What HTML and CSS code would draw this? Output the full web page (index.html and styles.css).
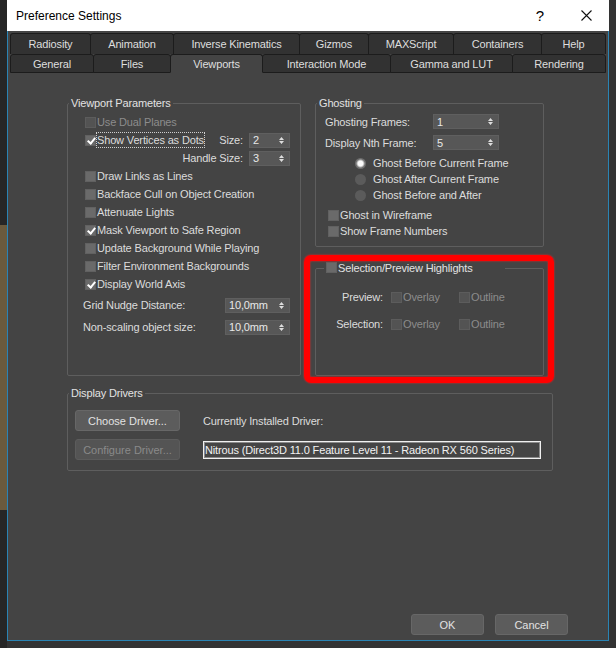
FILE: index.html
```html
<!DOCTYPE html>
<html lang="en">

<head>
    <meta charset="UTF-8">
    <meta name="viewport" content="width=device-width, initial-scale=1.0">
    <title>Preference Settings</title>
    <link rel="stylesheet" href="styles.css">
</head>

<body>
    <div class="window">
        <div class="titlebar">
            <span class="title">Preference Settings</span>
            <span class="cap help">?</span>
            <span class="cap close">
                <svg width="11" height="11" viewBox="0 0 11 11">
                    <path d="M0.5 0.5L10.5 10.5M10.5 0.5L0.5 10.5" stroke="#111" stroke-width="1.1" fill="none" />
                </svg>
            </span>
        </div>
        <div class="client">
            <div class="tabs">
                <div class="tabrow back">
                    <div class="tab">Radiosity</div>
                    <div class="tab">Animation</div>
                    <div class="tab">Inverse Kinematics</div>
                    <div class="tab">Gizmos</div>
                    <div class="tab">MAXScript</div>
                    <div class="tab">Containers</div>
                    <div class="tab">Help</div>
                </div>
                <div class="tabrow front">
                    <div class="tab">General</div>
                    <div class="tab">Files</div>
                    <div class="tab active">Viewports</div>
                    <div class="tab">Interaction Mode</div>
                    <div class="tab">Gamma and LUT</div>
                    <div class="tab">Rendering</div>
                </div>
            </div>

            <div class="panel">
                <div class="columns">
                    <fieldset class="group vp">
                        <legend>Viewport Parameters</legend>
                        <div class="vp-body">
                            <div class="row"><span class="cb off"></span><span class="dim">Use Dual Planes</span></div>
                            <div class="row">
                                <span class="cb checked"></span><span class="focus">Show Vertices as Dots</span>
                                <span class="lbl push">Size:</span>
                                <span class="spin sm">2<svg class="arr" width="5" height="9" viewBox="0 0 5 9"><path d="M0 4H5L2.5 1ZM0 5H5L2.5 8Z" fill="#ddd" /></svg></span>
                            </div>
                            <div class="row">
                                <span class="lbl push">Handle Size:</span>
                                <span class="spin sm">3<svg class="arr" width="5" height="9" viewBox="0 0 5 9"><path d="M0 4H5L2.5 1ZM0 5H5L2.5 8Z" fill="#ddd" /></svg></span>
                            </div>
                            <div class="row"><span class="cb"></span><span>Draw Links as Lines</span></div>
                            <div class="row"><span class="cb"></span><span>Backface Cull on Object Creation</span></div>
                            <div class="row"><span class="cb"></span><span>Attenuate Lights</span></div>
                            <div class="row"><span class="cb checked"></span><span>Mask Viewport to Safe Region</span></div>
                            <div class="row"><span class="cb"></span><span>Update Background While Playing</span></div>
                            <div class="row"><span class="cb"></span><span>Filter Environment Backgrounds</span></div>
                            <div class="row"><span class="cb checked"></span><span>Display World Axis</span></div>
                            <div class="row tall first">
                                <span>Grid Nudge Distance:</span>
                                <span class="spin md">10,0mm<svg class="arr" width="5" height="9" viewBox="0 0 5 9"><path d="M0 4H5L2.5 1ZM0 5H5L2.5 8Z" fill="#ddd" /></svg></span>
                            </div>
                            <div class="row tall">
                                <span>Non-scaling object size:</span>
                                <span class="spin md">10,0mm<svg class="arr" width="5" height="9" viewBox="0 0 5 9"><path d="M0 4H5L2.5 1ZM0 5H5L2.5 8Z" fill="#ddd" /></svg></span>
                            </div>
                        </div>
                    </fieldset>

                    <div class="col">
                        <fieldset class="group ghost">
                            <legend>Ghosting</legend>
                            <div class="ghost-body">
                                <div class="g-row">
                                    <span class="g-lbl">Ghosting Frames:</span>
                                    <span class="spin lg">1<svg class="arr" width="5" height="9" viewBox="0 0 5 9"><path d="M0 4H5L2.5 1ZM0 5H5L2.5 8Z" fill="#ddd" /></svg></span>
                                </div>
                                <div class="g-row">
                                    <span class="g-lbl">Display Nth Frame:</span>
                                    <span class="spin lg">5<svg class="arr" width="5" height="9" viewBox="0 0 5 9"><path d="M0 4H5L2.5 1ZM0 5H5L2.5 8Z" fill="#ddd" /></svg></span>
                                </div>
                                <div class="radios">
                                    <div class="r-row"><span class="radio on"></span>Ghost Before Current Frame</div>
                                    <div class="r-row"><span class="radio"></span>Ghost After Current Frame</div>
                                    <div class="r-row"><span class="radio"></span>Ghost Before and After</div>
                                </div>
                                <div class="checks">
                                    <div class="r-row"><span class="cb"></span>Ghost in Wireframe</div>
                                    <div class="r-row"><span class="cb"></span>Show Frame Numbers</div>
                                </div>
                            </div>
                        </fieldset>

                        <div class="highlight">
                            <fieldset class="group sel">
                                <legend><span class="cb"></span>Selection/Preview Highlights</legend>
                                <div class="sel-body">
                                    <div class="s-row">
                                        <span class="s-lbl">Preview:</span>
                                        <span class="s-opt"><span class="cb off"></span><span class="dim">Overlay</span></span>
                                        <span class="s-opt"><span class="cb off"></span><span class="dim">Outline</span></span>
                                    </div>
                                    <div class="s-row">
                                        <span class="s-lbl">Selection:</span>
                                        <span class="s-opt"><span class="cb off"></span><span class="dim">Overlay</span></span>
                                        <span class="s-opt"><span class="cb off"></span><span class="dim">Outline</span></span>
                                    </div>
                                </div>
                            </fieldset>
                        </div>
                    </div>
                </div>

                <fieldset class="group drivers">
                    <legend>Display Drivers</legend>
                    <div class="drv-body">
                        <button class="btn">Choose Driver...</button>
                        <span class="drv-lbl">Currently Installed Driver:</span>
                        <button class="btn" disabled>Configure Driver...</button>
                        <span class="drv-field">Nitrous (Direct3D 11.0 Feature Level 11 - Radeon RX 560 Series)</span>
                    </div>
                </fieldset>
            </div>

            <div class="footer">
                <button class="btn wide">OK</button>
                <button class="btn wide">Cancel</button>
            </div>
        </div>
    </div>
</body>

</html>
```

FILE: styles.css
```css
* {
    box-sizing: border-box;
}

html,
body {
    margin: 0;
}

body {
    width: 616px;
    height: 648px;
    overflow: hidden;
    font-family: "Liberation Sans", Arial, sans-serif;
    font-size: 11px;
    letter-spacing: -0.15px;
    color: #dcdcdc;
    /* desktop behind the dialog */
    background: linear-gradient(#262626 0 225px, #6a5a3d 225px 510px, #262626 510px) 0 0 / 7px 100% no-repeat, #333333;
}

.window {
    margin-left: 7px;
    width: 602px;
    height: 641px;
    display: flex;
    flex-direction: column;
}

.titlebar {
    height: 31px;
    flex: none;
    display: flex;
    align-items: center;
    padding-left: 9px;
    background: #fff;
    color: #000;
    font-size: 12px;
    letter-spacing: 0;
}

.title {
    flex: 1;
}

.cap {
    width: 46px;
    height: 31px;
    display: flex;
    align-items: center;
    justify-content: center;
}

.help {
    font-size: 15px;
}

.client {
    flex: 1;
    display: flex;
    flex-direction: column;
    background: #444;
    border: 1px solid #2a84b4;
    border-top: none;
}

/* tabs */
.tabs {
    padding: 2px 0 0 2px;
}

.tabrow {
    display: flex;
    width: 596px;
}

.tab {
    flex: none;
    height: 21px;
    line-height: 20px;
    text-align: center;
    background: #323232;
    color: #dedede;
    border: 1px solid #1c1c1c;
    border-bottom: none;
    border-radius: 3px 3px 0 0;
    margin-right: -1px;
}

.back .tab:nth-child(1) { width: 81px; }
.back .tab:nth-child(2) { width: 84px; }
.back .tab:nth-child(3) { width: 127px; }
.back .tab:nth-child(4) { width: 70px; }
.back .tab:nth-child(5) { width: 86px; }
.back .tab:nth-child(6) { width: 89px; }
.back .tab:nth-child(7) { width: 65px; }

.front .tab:nth-child(1) { width: 84px; }
.front .tab:nth-child(2) { width: 78px; }
.front .tab:nth-child(3) { width: 93px; }
.front .tab:nth-child(4) { width: 129px; }
.front .tab:nth-child(5) { width: 123px; }
.front .tab:nth-child(6) { width: 94px; }

.front .tab {
    height: 19px;
    line-height: 18px;
    border-bottom: 1px solid #1c1c1c;
}

.front .tab.active {
    background: #444;
    border-bottom-color: #444;
    position: relative;
    z-index: 1;
}

/* page */
.panel {
    padding: 23px 0 0 59px;
}

.columns {
    display: grid;
    grid-template-columns: 234px 229px;
    column-gap: 14px;
}

.col {
    display: flex;
    flex-direction: column;
}

.group {
    margin: 0;
    padding: 0;
    min-width: 0;
    border: 1px solid #5e5e5e;
    border-radius: 2px;
}

.group legend {
    margin-left: 1px;
    padding: 0 2px;
    line-height: 14px;
    color: #e2e2e2;
}

.row {
    display: flex;
    align-items: center;
    height: 18px;
}

.row.tall {
    height: 22px;
    justify-content: space-between;
}

.row.first {
    margin-top: 1px;
}

.vp-body {
    padding: 3px 10px 37px 15px;
}

.cb {
    width: 11px;
    height: 11px;
    flex: none;
    display: inline-block;
    margin: 0 1px 0 2px;
    background: #6a6a6a;
    border: 1px solid #616161;
    position: relative;
    vertical-align: -1px;
}

.cb.off {
    background: #535353;
    border-color: #5c5c5c;
}

.cb.checked::after {
    content: "";
    position: absolute;
    left: 3px;
    top: 0;
    width: 3px;
    height: 6px;
    border: solid #fff;
    border-width: 0 2px 2px 0;
    transform: rotate(40deg);
}

.dim {
    color: #8c8c8c;
}

.focus {
    margin-left: -1px;
    border: 1px dotted #cfcfcf;
    line-height: 14px;
}

.push {
    margin-left: auto;
}

.lbl {
    margin-right: 6px;
}

.spin {
    display: flex;
    align-items: center;
    justify-content: space-between;
    height: 15px;
    padding: 0 5px 0 3px;
    background: #575757;
    border: 1px solid #5f5f5f;
    color: #e8e8e8;
}

.spin.sm {
    width: 41px;
}

.spin.md {
    width: 65px;
}

.spin.lg {
    width: 66px;
}

/* ghosting */
.ghost-body {
    padding: 1px 9px 7px 9px;
}

.g-row {
    display: flex;
    align-items: center;
    height: 21px;
}

.g-lbl {
    width: 108px;
}

.radios {
    margin-top: 2px;
}

.checks {
    margin-top: 4px;
}

.r-row {
    display: flex;
    align-items: center;
    height: 16px;
}

.radio {
    width: 11px;
    height: 11px;
    margin: 0 7px 0 30px;
    border-radius: 50%;
    background: #5b5b5b;
}

.radio.on {
    background: radial-gradient(circle, #fafafa 0 2.5px, #c8c8c8 3.2px, #6e6e6e 4.5px);
}

.checks .cb {
    margin-left: 3px;
}

/* selection highlights */
.highlight {
    position: relative;
    flex: 1;
    display: flex;
    margin-top: 14px;
}

.highlight::after {
    content: "";
    position: absolute;
    left: -11px;
    top: -6px;
    right: -10px;
    bottom: -7px;
    border: 6px solid #ff0000;
    border-radius: 7px;
    box-shadow: 0 0 2px #ff2020, inset 0 0 2px #ff2020;
}

.sel {
    flex: 1;
}

.sel legend {
    margin-left: 8px;
    padding: 0 32px 0 2px;
}

.sel legend .cb {
    margin: 0 1px 0 0;
}

.sel-body {
    padding-top: 13px;
}

.s-row {
    display: flex;
    align-items: center;
    height: 18px;
}

.s-row+.s-row {
    margin-top: 9px;
}

.s-lbl {
    width: 67px;
    text-align: right;
    margin-right: 6px;
}

.s-opt {
    width: 68px;
    display: flex;
    align-items: center;
}

/* display drivers */
.drivers {
    width: 486px;
    margin-top: 10px;
}

.drv-body {
    display: grid;
    grid-template-columns: 105px 338px;
    grid-auto-rows: 21px;
    column-gap: 23px;
    row-gap: 8px;
    align-items: center;
    padding: 10px 7px 10px 7px;
}

.btn {
    height: 21px;
    padding: 0;
    font: inherit;
    color: #e2e2e2;
    background: #5c5c5c;
    border: 1px solid #676767;
    border-radius: 3px;
}

.btn:disabled {
    color: #8a8a8a;
    background: #545454;
    border-color: #5c5c5c;
}

.drv-field {
    height: 18px;
    line-height: 16px;
    padding-left: 1px;
    border: 1px solid #f0f0f0;
    box-shadow: inset 0 0 0 1px #8a8a8a;
    background: #454545;
    color: #f2f2f2;
    white-space: nowrap;
    overflow: hidden;
}

.footer {
    margin-top: auto;
    display: flex;
    justify-content: flex-end;
    gap: 11px;
    padding: 0 40px 5px 0;
}

.btn.wide {
    width: 73px;
}
```
